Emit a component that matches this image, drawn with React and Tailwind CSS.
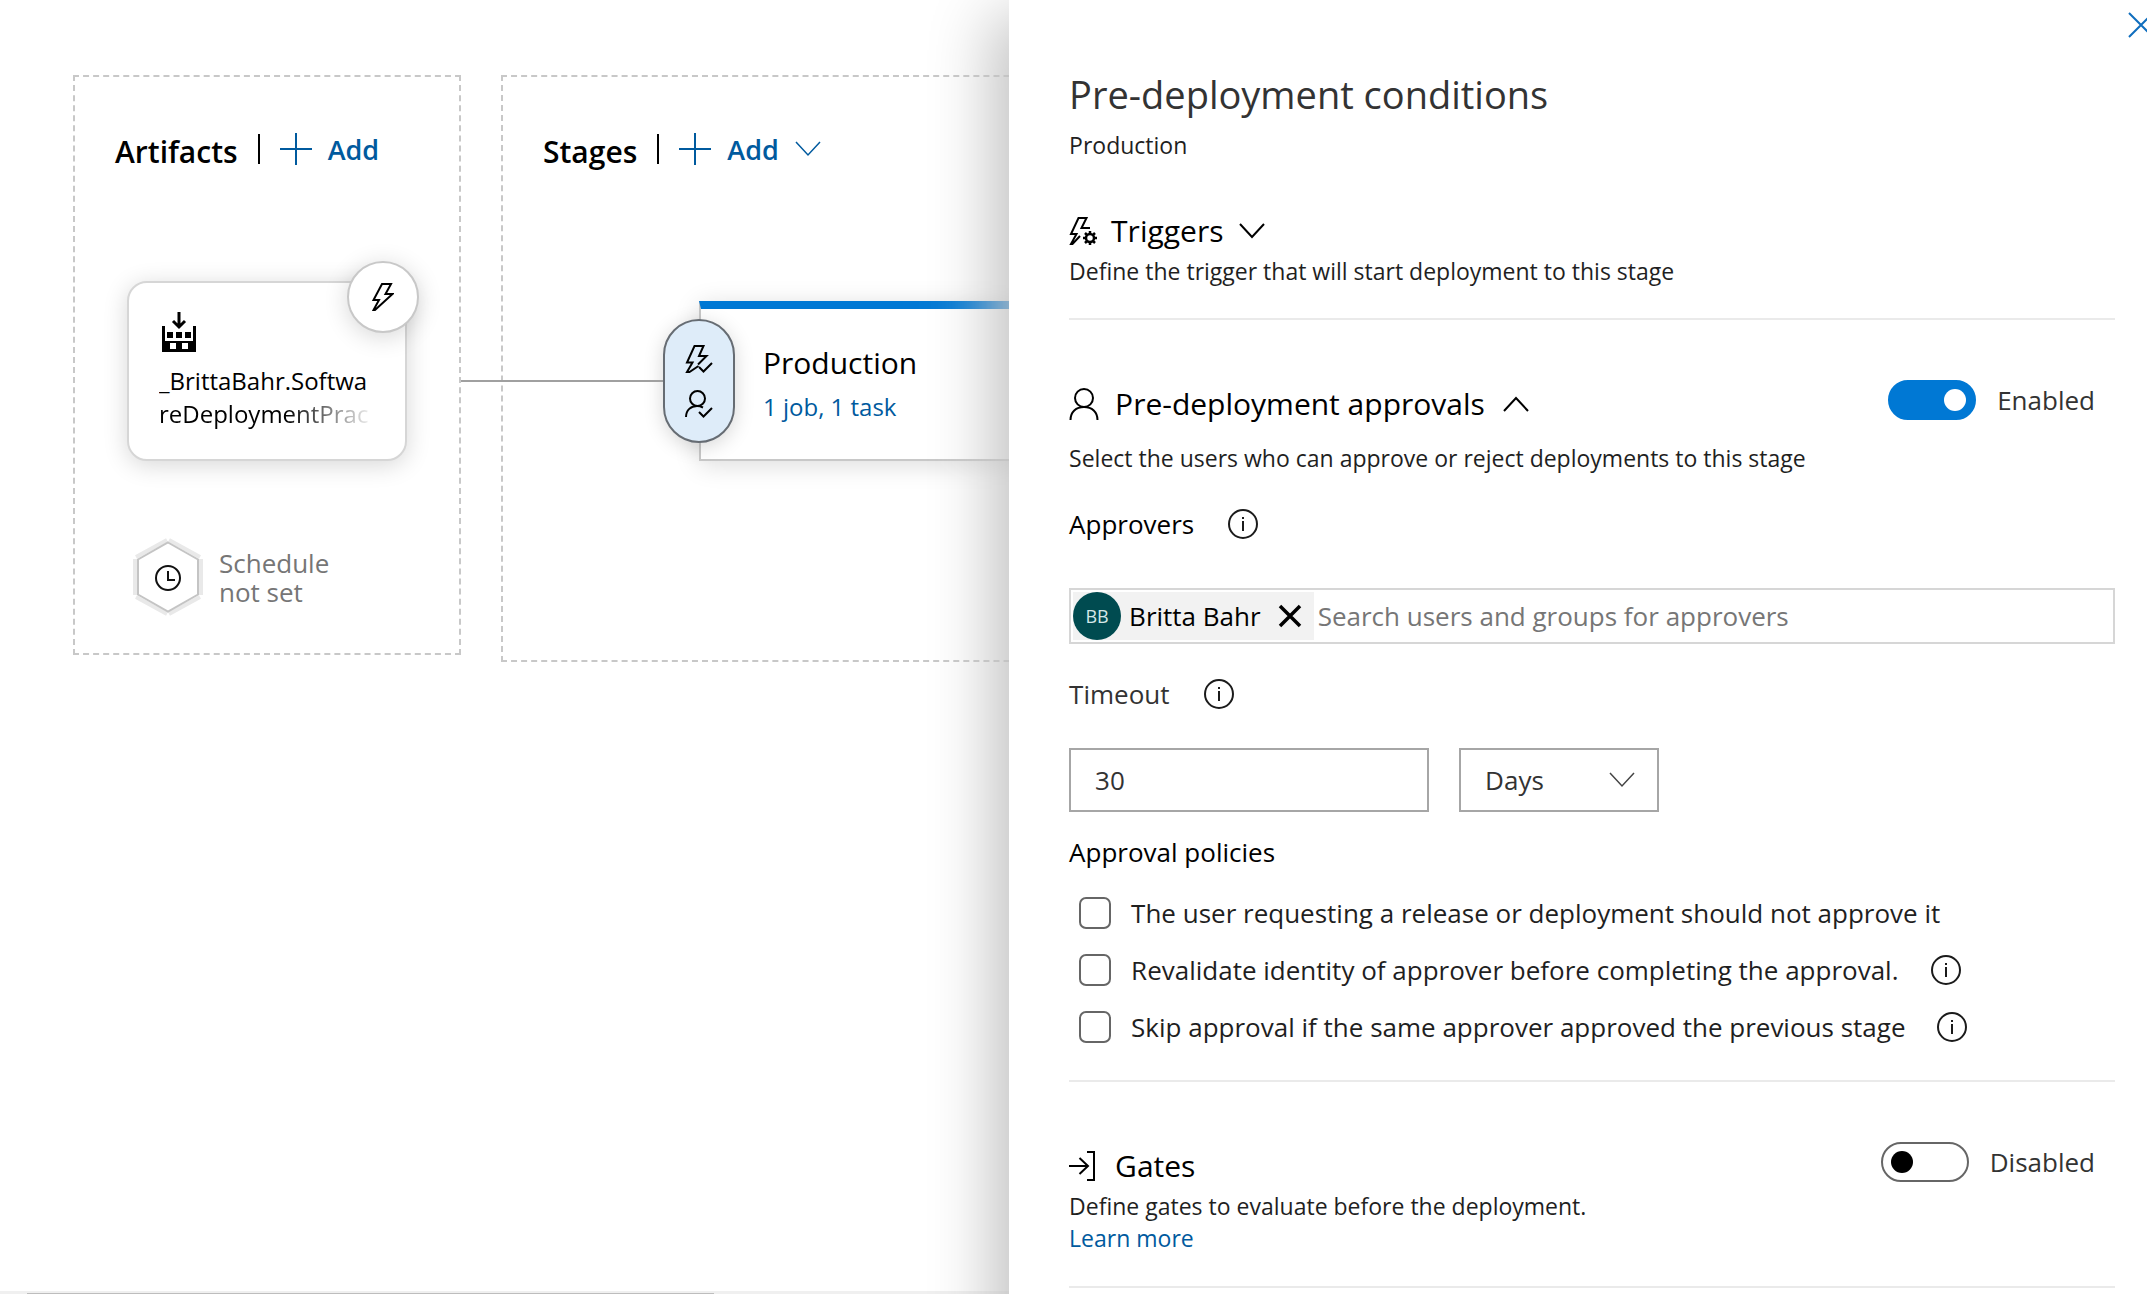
import React from "react";

function Icon({ w, h, children, sw = 2, className = "" }) {
  return (
    <svg
      width={w}
      height={h}
      viewBox={`0 0 ${w} ${h}`}
      fill="none"
      stroke="currentColor"
      strokeWidth={sw}
      className={`shrink-0 ${className}`}
      aria-hidden="true"
    >
      {children}
    </svg>
  );
}

const Plus = () => (
  <Icon w={32} h={32}>
    <path d="M16 0V32M0 16H32" />
  </Icon>
);

const ChevronDown = ({ className, sw = 2 }) => (
  <Icon w={26} h={16} sw={sw} className={className}>
    <path d="M1 1L13 14L25 1" />
  </Icon>
);

const ChevronUp = () => (
  <Icon w={26} h={16}>
    <path d="M1 15L13 2L25 15" />
  </Icon>
);

const Info = () => (
  <Icon w={30} h={30}>
    <circle cx="15" cy="15" r="14" />
    <path d="M15 12V22M15 8V10" />
  </Icon>
);

function InfoButton({ label }) {
  return (
    <button type="button" aria-label={label} className="text-[#1b1b1b]">
      <Info />
    </button>
  );
}

const Bolt = () => (
  <Icon w={22} h={28}>
    <path d="M10 1H19L13.500 11H20.500L3 27H1.500L7 17H1.500Z" />
  </Icon>
);

const BoltCheck = () => (
  <Icon w={28} h={28}>
    <path d="M13.500 21L4.500 27H2L7.500 17.500H2L9.500 1H18.500L14 11H21.500L13 19.500" />
    <path d="M14 22L18.500 26.500L27 18" />
  </Icon>
);

const PersonCheck = () => (
  <Icon w={28} h={28}>
    <circle cx="12.500" cy="8.500" r="7.500" />
    <path d="M1 27C1 20 6 16 12 16Q15 16 18 17.500" />
    <path d="M14 22L18.500 26.500L27 18" />
  </Icon>
);

const BoltGear = () => (
  <Icon w={28} h={28}>
    <path d="M21 11H12.500L17.500 1H9.500L2 17H7.500L2 27H3.500L11 19" />
    <circle cx="21" cy="21" r="4" strokeWidth="2.500" />
    <path d="M21 14V17M21 25V28M14 21H17M25 21H28M16 16L18.200 18.200M23.800 23.800L26 26M16 26L18.200 23.800M23.800 18.200L26 16" strokeWidth="2.500" />
  </Icon>
);

const Person = () => (
  <Icon w={30} h={32}>
    <circle cx="15" cy="10" r="9" />
    <path d="M1.500 32C1.500 24 7 19 15 19S28.500 24 28.500 32" />
  </Icon>
);

const Gate = () => (
  <Icon w={28} h={30}>
    <path d="M0 15H19M10.500 7L19 15L10.500 23M18 1H25V29H18" />
  </Icon>
);

const Build = () => (
  <svg width="34" height="40" viewBox="0 0 34 40" fill="currentColor" className="ml-[3px]" aria-hidden="true">
    <path d="M0 14H3V29H31V14H34V40H0ZM8 31V37H14V31ZM20 31V37H26V31Z" fillRule="evenodd" />
    <path d="M5 20H11V26H5ZM14 20H20V26H14ZM23 20H29V26H23Z" />
    <path d="M17 0V14M11 9L17 15L23 9" stroke="currentColor" strokeWidth="3" fill="none" />
  </svg>
);

const ScheduleHex = () => (
  <svg width="70" height="78" viewBox="0 0 70 78" fill="none" className="shrink-0" aria-hidden="true">
    <path d="M2 21V57M68 21V57M3 19L34 2M36 2L67 19M3 59L34 76M36 76L67 59" stroke="#e9e9e9" strokeWidth="4" />
    <path d="M35 4.500L65 21.500V56.500L35 73.500L5 56.500V21.500Z" stroke="#c4c4c4" strokeWidth="2" />
    <circle cx="35" cy="40" r="12" stroke="#111" strokeWidth="2" />
    <path d="M35 33V42H42" stroke="#111" strokeWidth="2" />
  </svg>
);

function ColumnHeader({ title, chevron }) {
  return (
    <div className="flex h-8 items-center">
      <h2 className="pt-1.5 text-[30px] leading-10 font-semibold">{title}</h2>
      <span className="ml-5 h-[30px] w-0.5 bg-black" />
      <button type="button" className="ml-5 flex items-center text-[#005a9e]">
        <Plus />
        <span className="ml-4 pt-0.5 text-[27px] leading-9 font-semibold">Add</span>
        {chevron && <ChevronDown className="ml-4" sw={1.5} />}
      </button>
    </div>
  );
}

function Toggle({ id, label, on }) {
  return (
    <div className="flex h-10 items-center gap-[21px] pr-5">
      <input
        id={id}
        type="checkbox"
        role="switch"
        defaultChecked={on}
        className="flex h-10 w-[88px] appearance-none items-center rounded-full border-2 border-[#666] px-2 before:size-[22px] before:rounded-full before:bg-black checked:justify-end checked:border-[#0078d4] checked:bg-[#0078d4] checked:before:bg-white"
      />
      <label htmlFor={id} className="text-[26px] leading-9 text-[#333]">
        {label}
      </label>
    </div>
  );
}

function Policy({ id, text, info }) {
  return (
    <div className="flex h-[57px] items-center">
      <input
        id={id}
        type="checkbox"
        className="size-8 shrink-0 appearance-none rounded-[7px] border-2 border-[#666] checked:bg-[#0078d4]"
      />
      <label htmlFor={id} className="mr-8 ml-5 text-[26px] leading-9 text-[#1f1f1f]">
        {text}
      </label>
      {info && <InfoButton label={`About: ${text}`} />}
    </div>
  );
}

function Canvas() {
  return (
    <main className="relative min-w-0 flex-1 overflow-hidden">
      <div className="flex items-start gap-10 pt-[75px] pl-[73px]">
        <section className="h-[580px] w-[388px] shrink-0 border-2 border-dashed border-[#c8c8c8] pt-14 pl-10">
          <ColumnHeader title="Artifacts" />
          <div className="relative mt-[116px] ml-3 h-[180px] w-[280px] rounded-[20px] border-2 border-[#d6d6d6] bg-white pt-[29px] pl-[30px] shadow-[0_4px_24px_rgba(0,0,0,0.16)]">
            <Build />
            <p className="mt-3 w-[212px] overflow-hidden text-2xl leading-[33px]">
              <span className="block">_BrittaBahr.Softwa</span>
              <span className="block [mask-image:linear-gradient(to_right,black_60%,transparent_102%)]">
                reDeploymentPrac
              </span>
            </p>
            <button
              type="button"
              aria-label="Continuous deployment trigger"
              className="absolute -top-[22px] -right-3.5 flex size-[72px] items-center justify-center rounded-full border-2 border-[#c8c8c8] bg-white shadow-[0_4px_24px_rgba(0,0,0,0.16)]"
            >
              <Bolt />
            </button>
          </div>
          <div className="mt-[77px] ml-[18px] flex items-center gap-4">
            <ScheduleHex />
            <p className="w-32 pt-0.5 text-[26px] leading-[29px] text-[#767676]">Schedule not set</p>
          </div>
        </section>

        <section className="h-[587px] w-[800px] shrink-0 border-2 border-dashed border-[#c8c8c8] pt-14 pl-10">
          <ColumnHeader title="Stages" chevron />
          <div className="relative mt-[136px] ml-[156px] h-[160px] w-[400px] border-2 border-t-8 border-[#c8c8c8] border-t-[#0078d4] bg-white pt-[34px] pl-[62px] shadow-[0_4px_24px_rgba(0,0,0,0.14)]">
            <h3 className="text-[30px] leading-10">Production</h3>
            <a href="#tasks" className="mt-2 block text-2xl leading-8 text-[#005a9e]">
              1 job, 1 task
            </a>
            <button
              type="button"
              aria-label="Pre-deployment conditions"
              className="absolute top-2.5 -left-[38px] flex h-[124px] w-[72px] flex-col items-center justify-center gap-[17px] rounded-full border-2 border-[#666c73] bg-[#deecf9] shadow-[0_4px_20px_rgba(0,0,0,0.16)]"
            >
              <BoltCheck />
              <PersonCheck />
            </button>
          </div>
        </section>
      </div>
      <div className="absolute top-[380px] left-[461px] h-0.5 w-[202px] bg-[#a0a0a0]" />
      <div className="absolute inset-x-0 bottom-0 h-[3px] bg-[#f0f0f0] pt-0.5 pl-[27px]">
        <div className="h-px w-[70%] bg-[#bdbdbd]" />
      </div>
    </main>
  );
}

function ConditionsPanel() {
  return (
    <aside className="relative z-10 h-[110vh] w-[53%] bg-white pt-[68px] pr-8 pl-[60px] shadow-[0_32px_60px_17px_#c2c2c2]">
      <button type="button" aria-label="Close" className="absolute top-3 -right-[7px] text-[#106ebe]">
        <Icon w={26} h={26}>
          <path d="M1 1L25 25M25 1L1 25" />
        </Icon>
      </button>

      <h1 className="text-[38px] leading-[52px] text-[#333]">Pre-deployment conditions</h1>
      <p className="mt-[9px] text-[23px] leading-8 text-[#1f1f1f]">Production</p>

      <section className="mt-[50px] border-b-2 border-[#eaeaea] pb-[31px]">
        <h2>
          <button type="button" className="flex items-center text-[30px] leading-10">
            <BoltGear />
            <span className="ml-3.5">Triggers</span>
            <ChevronDown className="ml-4" />
          </button>
        </h2>
        <p className="mt-1 text-[23px] leading-8 text-[#1f1f1f]">
          Define the trigger that will start deployment to this stage
        </p>
      </section>

      <section className="border-b-2 border-[#eaeaea] pt-[60px] pb-[25px]">
        <div className="flex items-start justify-between">
          <h2 className="mt-1">
            <button type="button" className="flex items-center text-[30px] leading-10">
              <Person />
              <span className="mr-[18px] ml-4">Pre-deployment approvals</span>
              <ChevronUp />
            </button>
          </h2>
          <Toggle id="approvals" label="Enabled" on />
        </div>
        <p className="mt-[18px] text-[23px] leading-8 text-[#1f1f1f]">
          Select the users who can approve or reject deployments to this stage
        </p>

        <div className="mt-8 flex items-center gap-[34px]">
          <label htmlFor="approvers" className="text-[26px] leading-9">
            Approvers
          </label>
          <InfoButton label="About approvers" />
        </div>
        <div className="mt-[46px] flex h-14 items-center border-2 border-[#d6d6d6] px-0.5">
          <div className="flex h-12 items-center bg-[#f2f2f2] pr-3">
            <span className="flex size-12 items-center justify-center rounded-full bg-[#004b50] text-lg text-[#d5e8e8]">
              BB
            </span>
            <span className="ml-2 text-[26px] leading-9">Britta Bahr</span>
            <button type="button" aria-label="Remove Britta Bahr" className="ml-[17px]">
              <Icon w={24} h={24} sw={3.5}>
                <path d="M2 2L22 22M22 2L2 22" />
              </Icon>
            </button>
          </div>
          <input
            id="approvers"
            type="text"
            placeholder="Search users and groups for approvers"
            className="ml-1 min-w-0 flex-1 text-[26px] leading-9 outline-none placeholder:text-[#767676]"
          />
        </div>

        <div className="mt-8 flex items-center gap-[34px]">
          <label htmlFor="timeout" className="text-[26px] leading-9 text-[#333]">
            Timeout
          </label>
          <InfoButton label="About timeout" />
        </div>
        <div className="mt-9 flex gap-[30px]">
          <input
            id="timeout"
            type="text"
            defaultValue="30"
            className="h-16 w-[360px] border-2 border-[#a6a6a6] px-6 text-[26px] leading-9 text-[#333]"
          />
          <div className="relative">
            <select
              aria-label="Timeout unit"
              className="h-16 w-[200px] appearance-none border-2 border-[#a6a6a6] bg-white px-6 text-[26px] leading-9 text-[#333]"
            >
              <option>Days</option>
              <option>Hours</option>
              <option>Minutes</option>
            </select>
            <ChevronDown className="pointer-events-none absolute top-6 right-6 text-[#444]" sw={1.5} />
          </div>
        </div>

        <fieldset className="mt-[22px]">
          <legend className="text-[26px] leading-9">Approval policies</legend>
          <div className="mt-3.5 pl-2.5">
            <Policy id="policy-requester" text="The user requesting a release or deployment should not approve it" />
            <Policy id="policy-identity" text="Revalidate identity of approver before completing the approval." info />
            <Policy id="policy-skip" text="Skip approval if the same approver approved the previous stage" info />
          </div>
        </fieldset>
      </section>

      <section className="border-b-2 border-[#eaeaea] pt-[60px] pb-8">
        <div className="flex items-start justify-between">
          <h2 className="mt-1 flex items-center text-[30px] leading-10">
            <Gate />
            <span className="ml-[18px]">Gates</span>
          </h2>
          <Toggle id="gates" label="Disabled" />
        </div>
        <p className="mt-1 text-[23px] leading-8 text-[#1f1f1f]">Define gates to evaluate before the deployment.</p>
        <a href="#learn-more" className="block w-fit text-[23px] leading-8 text-[#005a9e]">
          Learn more
        </a>
      </section>
    </aside>
  );
}

export default function App() {
  return (
    <div className="flex h-screen overflow-hidden bg-white font-['Open_Sans','Noto_Sans',sans-serif] text-black">
      <Canvas />
      <ConditionsPanel />
    </div>
  );
}
